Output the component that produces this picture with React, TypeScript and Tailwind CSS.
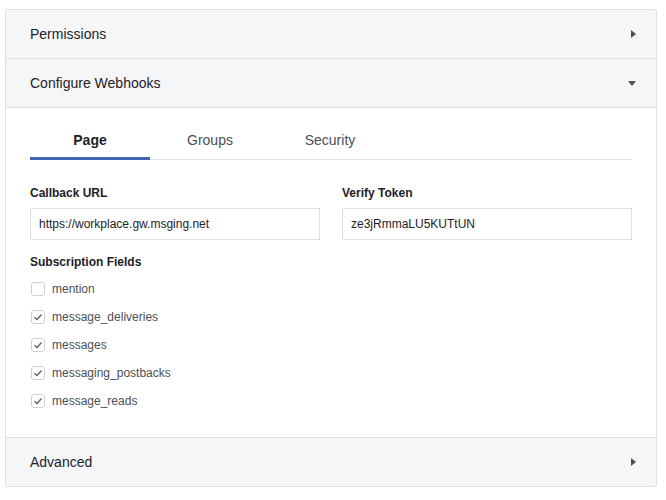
import React, { useState } from 'react';

type Field = {
  name: string;
  checked: boolean;
};

const fields: Field[] = [
  { name: 'mention', checked: false },
  { name: 'message_deliveries', checked: true },
  { name: 'messages', checked: true },
  { name: 'messaging_postbacks', checked: true },
  { name: 'message_reads', checked: true },
];

const tabs = ['Page', 'Groups', 'Security'];

const CaretRight = () => (
  <svg width="5" height="8" viewBox="0 0 5 8" className="block">
    <path d="M0 0 L5 4 L0 8 Z" fill="#4b4f56" />
  </svg>
);

const CaretDown = () => (
  <svg width="8" height="5" viewBox="0 0 8 5" className="block">
    <path d="M0 0 L8 0 L4 5 Z" fill="#4b4f56" />
  </svg>
);

const SectionHeader = ({ title, open }: { title: string; open?: boolean }) => (
  <div className="h-[48px] bg-[#f5f6f7] flex items-center justify-between pl-[24px] pr-[20px] text-[14px] text-[#1d2129]">
    <span>{title}</span>
    <span className="w-[10px] flex justify-end">{open ? <CaretDown /> : <CaretRight />}</span>
  </div>
);

const Checkbox = ({ checked }: { checked: boolean }) => (
  <span className="w-[14px] h-[14px] rounded-[3px] border border-[#ccd0d5] bg-white flex items-center justify-center ml-[1px]">
    {checked && (
      <svg width="10" height="8" viewBox="0 0 10 8">
        <path d="M1.5 4.2 L4 6.5 L8.5 1.5" fill="none" stroke="#606770" strokeWidth="1.5" />
      </svg>
    )}
  </span>
);

export default function App() {
  const [active, setActive] = useState('Page');

  return (
    <div className="min-h-[500px] bg-white pt-[9px] px-[5px] font-['Liberation_Sans',Arial,sans-serif]">
      <div className="w-[652px] border border-[#dddfe2] rounded-[2px] overflow-hidden">
        <SectionHeader title="Permissions" />
        <div className="border-t border-[#dddfe2]">
          <SectionHeader title="Configure Webhooks" open />
        </div>

        {/* Webhooks body */}
        <div className="border-t border-[#dddfe2] bg-white px-[24px] pt-[16px] pb-[22px]">
          <div className="flex border-b border-[#dddfe2]">
            {tabs.map((tab) => (
              <button
                key={tab}
                onClick={() => setActive(tab)}
                className={`w-[120px] h-[36px] -mb-px flex items-center justify-center text-[14px] border-b-[3px] ${
                  active === tab
                    ? 'border-[#4267b2] font-bold text-[#1d2129]'
                    : 'border-transparent text-[#4b4f56]'
                }`}
              >
                {tab}
              </button>
            ))}
          </div>

          <div className="grid grid-cols-2 gap-x-[22px] mt-[24px]">
            <div>
              <div className="text-[12px] leading-[16px] pt-[1px] font-bold text-[#1d2129] mb-[7px]">Callback URL</div>
              <div className="h-[32px] border border-[#dddfe2] flex items-center px-[8px] text-[12px] text-[#1d2129]">
                https://workplace.gw.msging.net
              </div>
            </div>
            <div>
              <div className="text-[12px] leading-[16px] pt-[1px] font-bold text-[#1d2129] mb-[7px]">Verify Token</div>
              <div className="h-[32px] border border-[#dddfe2] flex items-center px-[8px] text-[12px] text-[#1d2129]">
                ze3jRmmaLU5KUTtUN
              </div>
            </div>
          </div>

          <div className="mt-[13px] pt-[1px] text-[12px] leading-[16px] font-bold text-[#1d2129]">Subscription Fields</div>
          <div className="mt-[5px]">
            {fields.map((f) => (
              <label key={f.name} className="h-[28px] flex items-center gap-[7px] text-[12px] text-[#4b4f56]">
                <Checkbox checked={f.checked} />
                <span>{f.name}</span>
              </label>
            ))}
          </div>
        </div>

        <div className="border-t border-[#dddfe2]">
          <SectionHeader title="Advanced" />
        </div>
      </div>
    </div>
  );
}
